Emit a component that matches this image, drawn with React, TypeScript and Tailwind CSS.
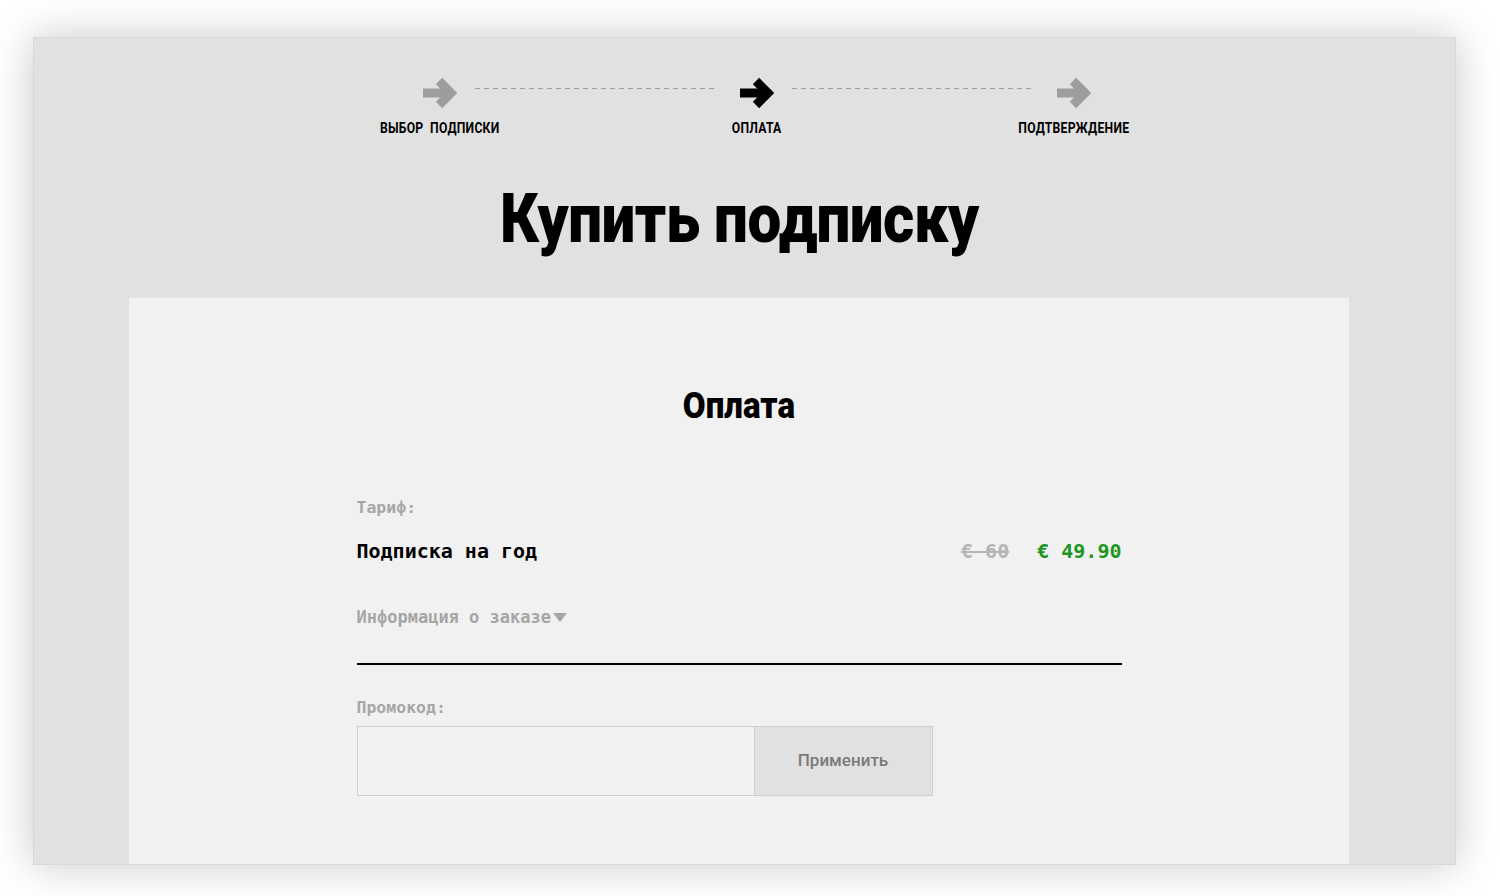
import React from "react";

const condensed = { fontFamily: '"Roboto", "Liberation Sans", sans-serif' };
const mono = { fontFamily: '"DejaVu Sans Mono", "Liberation Mono", monospace' };

function Arrow({ color }: { color: string }) {
  return (
    <svg width="34" height="32" viewBox="0 0 34 32" fill="none">
      <path d="M0 16 H26" stroke={color} strokeWidth="9" />
      <path d="M16 4 L28 16 L16 28" stroke={color} strokeWidth="9" strokeLinejoin="miter" />
    </svg>
  );
}

function Step({ label, active }: { label: string; active?: boolean }) {
  return (
    <div className="flex w-[34px] flex-col items-center">
      <Arrow color={active ? "#000000" : "#9d9d9d"} />
      <div
        className="mt-[11px] inline-block scale-x-[0.87] whitespace-pre text-[14px] font-bold leading-4 tracking-[0.3px] text-black"
        style={condensed}
      >
        {label}
      </div>
    </div>
  );
}

function Dashes() {
  return (
    <div className="mr-[24px] ml-[18px] mt-[11px] h-px w-[241px] self-start bg-[repeating-linear-gradient(90deg,#9c9c9c_0_5px,transparent_5px_9px)]" />
  );
}

export default function App() {
  return (
    <div className="min-h-screen bg-white pt-[37px] pl-[33px]">
      <div className="h-[828px] w-[1423px] overflow-hidden border border-[#d8d8d8] bg-[#e1e1e1] shadow-[0_0_40px_rgba(0,0,0,0.22)]">
        <div className="ml-[389px] flex pt-[39px]">
          <Step label="ВЫБОР  ПОДПИСКИ" />
          <Dashes />
          <Step label="ОПЛАТА" active />
          <Dashes />
          <Step label="ПОДТВЕРЖДЕНИЕ" />
        </div>

        <div className="mt-[46px] ml-[-10px] flex justify-center">
          <h1
            className="inline-block scale-x-[0.885] whitespace-nowrap text-[68px] leading-[74px] font-black tracking-[-0.5px] text-black"
            style={condensed}
          >
            Купить подписку
          </h1>
        </div>

        <div className="mt-[42px] ml-[95px] h-[600px] w-[1220px] bg-[#f1f1f1] pt-[89px]">
          <div className="flex justify-center">
            <h2
              className="inline-block scale-x-[0.92] text-[36px] leading-[38px] font-black text-black"
              style={condensed}
            >
              Оплата
            </h2>
          </div>

          <div className="mx-auto mt-[71px] w-[765px]" style={mono}>
            <div className="text-[16.5px] leading-6 font-bold text-[#a6a6a6]">Тариф:</div>
            <div className="mt-[19px] flex items-center justify-between">
              <span className="text-[20px] leading-6 font-bold text-black">Подписка на год</span>
              <div className="flex items-center gap-[28px] text-[20px] leading-6 font-bold">
                <span className="text-[#b5b5b5] line-through">€ 60</span>
                <span className="text-[#1f961f]">€ 49.90</span>
              </div>
            </div>
            <div className="mt-[42px] flex items-center text-[17px] leading-6 font-bold text-[#a6a6a6]">
              <span>Информация о заказе</span>
              <svg width="14" height="9" viewBox="0 0 14 9" className="ml-[2px]">
                <path d="M0 0 H14 L7 9 Z" fill="#a6a6a6" />
              </svg>
            </div>
            <div className="mt-[34px] border-t-2 border-black" />

            <div className="mt-[31px] text-[16.5px] leading-6 font-bold text-[#a6a6a6]">Промокод:</div>
            <div className="mt-[6px] flex h-[70px] w-[576px]">
              <input className="h-full w-[398px] border border-[#cfcfcf] bg-[#f2f2f2] outline-none" />
              <button
                className="h-full flex-1 border border-l-0 border-[#cfcfcf] bg-[#e1e1e1] text-[17px] font-medium text-[#7a7a7a]"
                style={condensed}
              >
                Применить
              </button>
            </div>
          </div>
        </div>
      </div>
    </div>
  );
}
